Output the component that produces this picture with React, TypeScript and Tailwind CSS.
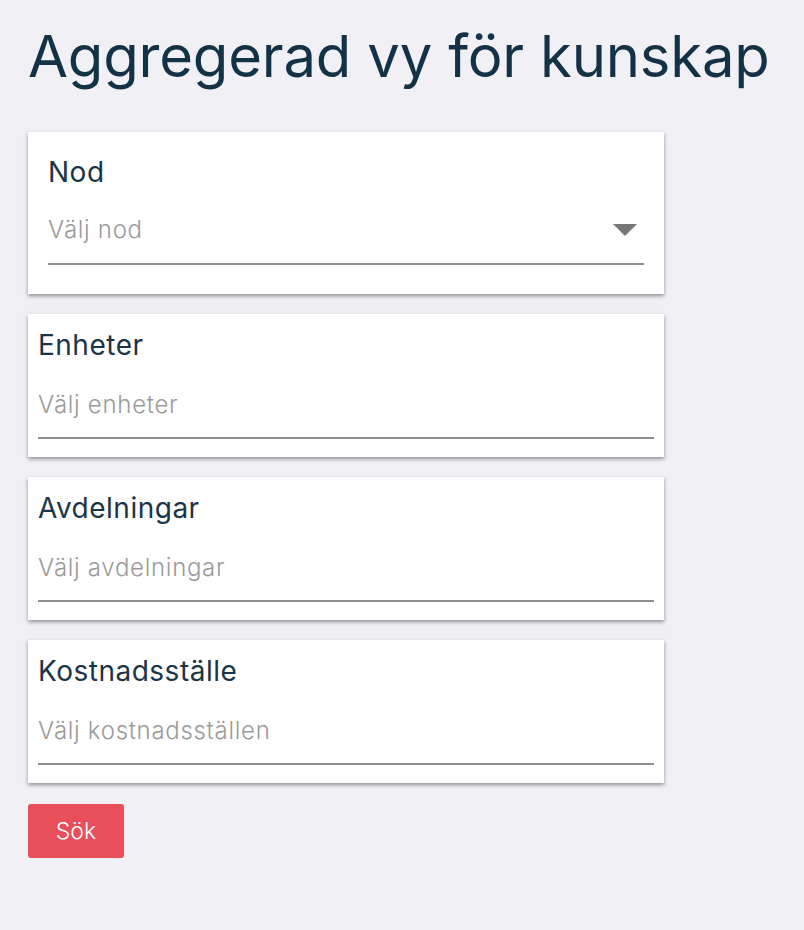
import React from "react";

const font = { fontFamily: "Inter, Lato, sans-serif" };

function Field({ label, placeholder }: { label: string; placeholder: string }) {
  return (
    <div className="bg-white px-[10px] pt-[14px] pb-[18px] shadow-[0_2px_4px_rgba(0,0,0,0.4)]">
      <div className="text-[28px] leading-[34px] tracking-[0.5px] text-[#1b3447]">{label}</div>
      <div className="mt-[28px] border-b-2 border-[#8f8f8f] pb-[17px]">
        <div className="text-[24px] leading-[30px] font-light tracking-[0.7px] text-[#9a9a9a]">{placeholder}</div>
      </div>
    </div>
  );
}

export default function App() {
  return (
    <div className="min-h-[930px] bg-[#f0f0f5] px-[28px] pt-[20px]" style={font}>
      <h1 className="text-[58px] leading-[72px] tracking-[-0.2px] text-[#143246]">Aggregerad vy för kunskap</h1>
      <div className="mt-[40px] flex w-[636px] flex-col gap-[20px]">
        <div className="bg-white px-[20px] pt-[23px] pb-[29px] shadow-[0_2px_4px_rgba(0,0,0,0.4)]">
          <div className="text-[28px] leading-[34px] tracking-[0.5px] text-[#1b3447]">Nod</div>
          <div className="mt-[26px] flex items-center justify-between border-b-2 border-[#8f8f8f] pb-[18px]">
            <div className="text-[24px] leading-[30px] font-light tracking-[0.7px] text-[#9a9a9a]">Välj nod</div>
            <svg width="24" height="12" viewBox="0 0 24 12" className="mr-[7px]">
              <polygon points="0,0 24,0 12,12" fill="#777777" />
            </svg>
          </div>
        </div>
        <Field label="Enheter" placeholder="Välj enheter" />
        <Field label="Avdelningar" placeholder="Välj avdelningar" />
        <Field label="Kostnadsställe" placeholder="Välj kostnadsställen" />
        <div className="pt-px">
          <button className="h-[54px] w-[96px] rounded-[3px] bg-[#e94e5b] text-[23px] font-light text-white">
            Sök
          </button>
        </div>
      </div>
    </div>
  );
}
